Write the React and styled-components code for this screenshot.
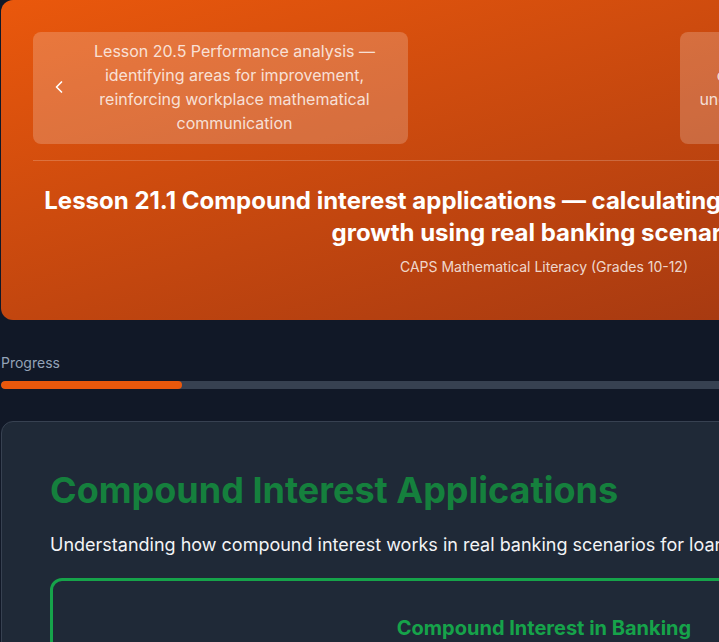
import styled, { createGlobalStyle } from 'styled-components'
import { ChevronLeft, ChevronRight } from 'lucide-react'

const GlobalStyle = createGlobalStyle`
  * {
    box-sizing: border-box;
  }
  body {
    margin: 0;
    background: #111827;
    font-family: Inter, "Noto Sans", sans-serif;
    color: #f3f4f6;
  }
`

const lesson = {
  prev: 'Lesson 20.5 Performance analysis — identifying areas for improvement, reinforcing workplace mathematical communication',
  next: 'Lesson 21.2 Loan amortisation — calculating monthly repayments and understanding interest versus the capital portions',
  title: 'Lesson 21.1 Compound interest applications — calculating bond costs and investment growth using real banking scenarios',
  subject: 'CAPS Mathematical Literacy (Grades 10-12)',
  progress: 1 / 6,
}

function App() {
  return (
    <>
      <GlobalStyle />
      <Page>
        <Header>
          <NavRow>
            <NavCard>
              <ChevronLeft size={20} />
              <NavText>{lesson.prev}</NavText>
            </NavCard>
            <NavCard>
              <NavText>{lesson.next}</NavText>
              <ChevronRight size={20} />
            </NavCard>
          </NavRow>
          <Title>{lesson.title}</Title>
          <Subject>{lesson.subject}</Subject>
        </Header>

        <ProgressSection>
          <ProgressLabel>Progress</ProgressLabel>
          <Track>
            <Fill style={{ width: `${lesson.progress * 100}%` }} />
          </Track>
        </ProgressSection>

        <ContentCard>
          <Heading>Compound Interest Applications</Heading>
          <Intro>
            Understanding how compound interest works in real banking scenarios for loans, savings and investments.
          </Intro>
          <Highlight>
            <HighlightTitle>Compound Interest in Banking</HighlightTitle>
          </Highlight>
        </ContentCard>
      </Page>
    </>
  )
}

const Page = styled.div`
  width: 1086px;
  margin-left: 1px;
`
const Header = styled.header`
  background: linear-gradient(to bottom right, #ea580c, #9a3412);
  border-radius: 12px;
  padding: 32px 32px 43px;
  margin-bottom: 33px;
  text-align: center;
`
const NavRow = styled.div`
  display: flex;
  justify-content: space-between;
  padding-bottom: 16px;
  border-bottom: 1px solid rgba(255, 255, 255, 0.2);
  margin-bottom: 24px;
`
const NavCard = styled.div`
  width: 375px;
  display: flex;
  align-items: center;
  gap: 8px;
  padding: 7px 16px 9px;
  background: rgba(255, 255, 255, 0.2);
  border-radius: 8px;
  color: #ffffff;
  svg {
    flex-shrink: 0;
  }
`
const NavText = styled.span`
  flex: 1;
  font-size: 16px;
  line-height: 24px;
  color: rgba(255, 255, 255, 0.8);
  text-align: center;
`
const Title = styled.h1`
  margin: 0;
  font-size: 24px;
  line-height: 32px;
  font-weight: 700;
  color: #ffffff;
`
const Subject = styled.p`
  margin: 8px 0 0;
  font-size: 14px;
  line-height: 20px;
  color: rgba(255, 255, 255, 0.8);
`
const ProgressSection = styled.div`
  margin-bottom: 32px;
`
const ProgressLabel = styled.div`
  font-size: 14px;
  line-height: 20px;
  color: #94a3b8;
  margin-bottom: 8px;
`
const Track = styled.div`
  height: 8px;
  background: #374151;
  border-radius: 9999px;
  overflow: hidden;
`
const Fill = styled.div`
  height: 100%;
  background: #ea580c;
  border-radius: 9999px;
`
const ContentCard = styled.section`
  background: #1f2937;
  border: 1px solid #374151;
  border-radius: 12px;
  padding: 48px;
`
const Heading = styled.h2`
  margin: 0 0 21px;
  font-size: 36px;
  line-height: 40px;
  font-weight: 700;
  color: #15803d;
`
const Intro = styled.p`
  margin: 0 0 19px;
  font-size: 18px;
  line-height: 28px;
  color: #f3f4f6;
`
const Highlight = styled.div`
  border: 3px solid #16a34a;
  border-radius: 12px;
  padding: 33px 32px 32px;
  text-align: center;
`
const HighlightTitle = styled.h3`
  margin: 0;
  font-size: 20px;
  line-height: 28px;
  font-weight: 700;
  color: #16a34a;
`

export default App
